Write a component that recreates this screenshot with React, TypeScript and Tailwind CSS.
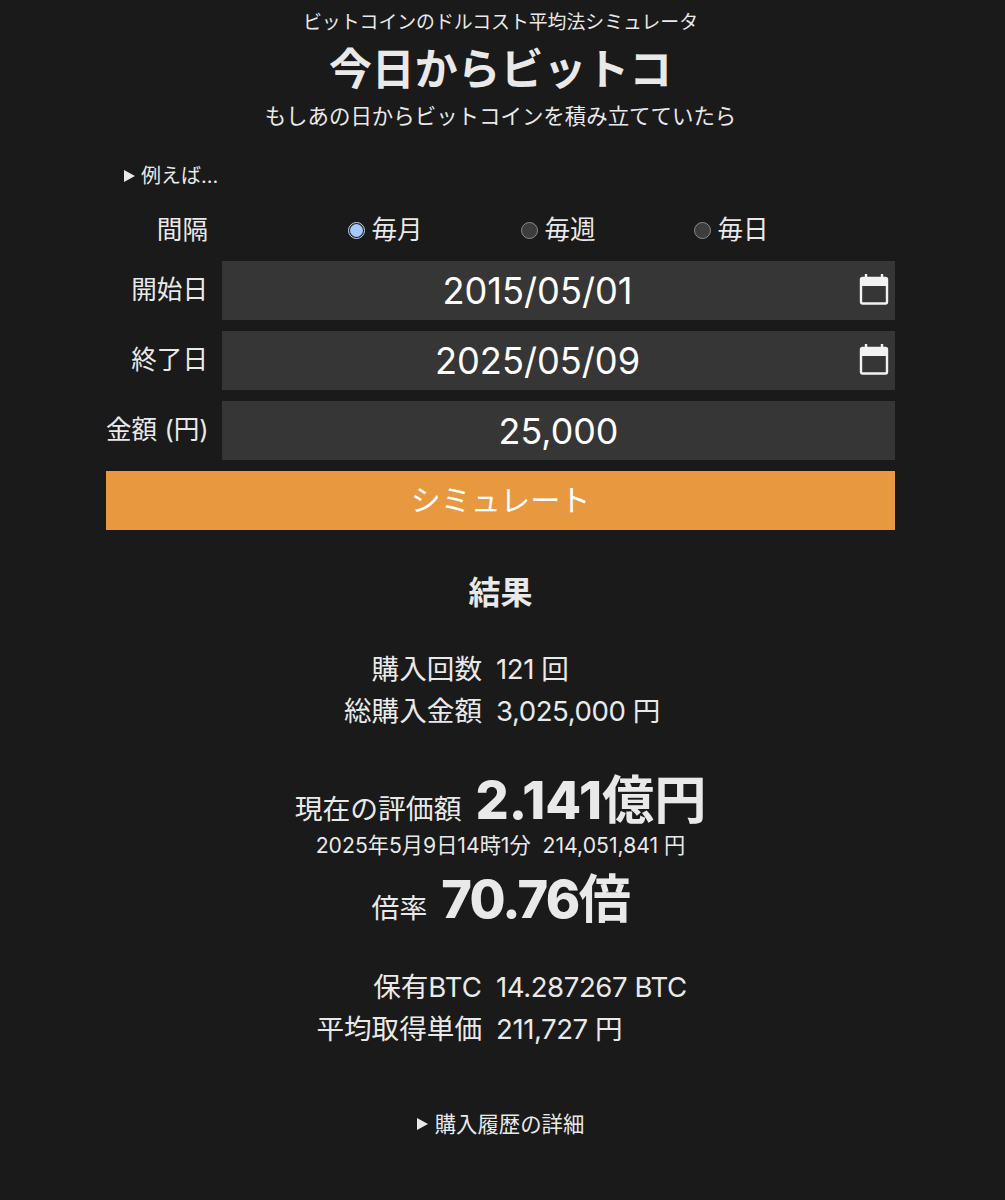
const fontStack = 'font-["Inter","Noto_Sans_CJK_JP",sans-serif]';

function CalendarIcon() {
  return (
    <svg width="30" height="32" viewBox="0 0 30 32" fill="none" className="absolute right-[6px] top-[12px] text-[#f2f2f2]">
      <path d="M7 1v4M23 1v4" stroke="currentColor" strokeWidth="2.4" />
      <path d="M1.5 7a2 2 0 0 1 2-2h23a2 2 0 0 1 2 2v6h-27z" fill="currentColor" />
      <rect x="2" y="5" width="26" height="25.5" rx="1.5" stroke="currentColor" strokeWidth="2.4" />
    </svg>
  );
}

function Radio({ label, checked }: { label: string; checked?: boolean }) {
  return (
    <div className="flex items-center justify-center gap-[6px]">
      {checked ? (
        <span className="w-[17px] h-[17px] rounded-full border border-[#c9d9f5] bg-[#1a1a1a] flex items-center justify-center">
          <span className="w-[13px] h-[13px] rounded-full bg-[#a5c8fd]" />
        </span>
      ) : (
        <span className="w-[17px] h-[17px] rounded-full border border-[#8a8a8a] bg-[#3d3d3d]" />
      )}
      <span>{label}</span>
    </div>
  );
}

function FormRow({ label, children }: { label: string; children: React.ReactNode }) {
  return (
    <div className="flex items-center gap-[14px]">
      <div className="w-[102px] text-right whitespace-nowrap">{label}</div>
      <div className="flex-1">{children}</div>
    </div>
  );
}

function DateField({ value }: { value: string }) {
  return (
    <div className="relative h-[59px] bg-[#363636] flex items-center justify-center pr-[42px] pt-[2px] text-[36.2px] text-white">
      {value}
      <CalendarIcon />
    </div>
  );
}

function StatRow({ label, value }: { label: string; value: string }) {
  return (
    <div className="grid grid-cols-[376px_1fr] gap-[14px] h-[42px] items-center text-[27.6px]">
      <div className="text-right">{label}</div>
      <div className="tracking-[-0.45px]">{value}</div>
    </div>
  );
}

export default function App() {
  return (
    <div className={`${fontStack} bg-[#1a1a1a] text-[#e9e9e9] min-h-[1200px] text-[25.6px] overflow-hidden`}>
      <div className="w-[789px] ml-[106px]">
        <div className="text-center pt-[10px]">
          <p className="text-[18.85px] leading-[25px]">ビットコインのドルコスト平均法シミュレータ</p>
          <h1 className="text-[42.9px] font-bold leading-[60px] mt-[4px]">今日からビットコ</h1>
          <p className="text-[21.45px] leading-[30px] mt-[2px]">もしあの日からビットコインを積み立てていたら</p>
        </div>

        <div className="mt-[31px] ml-[18px] text-[20px] leading-[28px] flex items-center">
          <span className="w-0 h-0 border-y-[6.5px] border-y-transparent border-l-[11px] border-l-[#e9e9e9] mr-[6px]" />
          例えば...
        </div>

        <div className="mt-[21px] flex flex-col gap-[11px]">
          <FormRow label="間隔">
            <div className="w-[519px] mx-auto grid grid-cols-3 h-[39px] items-center">
              <Radio label="毎月" checked />
              <Radio label="毎週" />
              <Radio label="毎日" />
            </div>
          </FormRow>
          <FormRow label="開始日">
            <DateField value="2015/05/01" />
          </FormRow>
          <FormRow label="終了日">
            <DateField value="2025/05/09" />
          </FormRow>
          <FormRow label="金額 (円)">
            <div className="h-[59px] bg-[#363636] flex items-center justify-center pt-[2px] text-[35.8px] text-white">25,000</div>
          </FormRow>
          <button className="h-[59px] bg-[#e8993f] text-white text-[30px]">シミュレート</button>
        </div>

        <h2 className="text-center text-[32px] font-bold leading-[44px] mt-[41px]">結果</h2>

        <div className="mt-[34px]">
          <StatRow label="購入回数" value="121 回" />
          <StatRow label="総購入金額" value="3,025,000 円" />
        </div>

        <div className="text-center mt-[36px]">
          <div className="flex items-baseline justify-center gap-[14px] leading-[62px] h-[62px]">
            <span className="text-[27.8px]">現在の評価額</span>
            <span className="text-[52.2px] font-bold"><span className="font-extrabold">2.141</span>億円</span>
          </div>
          <div className="text-[21.2px] leading-[28px]">2025年5月9日14時1分&nbsp;&nbsp;214,051,841 円</div>
          <div className="flex items-baseline justify-center gap-[14px] leading-[62px] h-[62px] mt-[9px]">
            <span className="text-[27.8px]">倍率</span>
            <span className="text-[52.2px] font-bold tracking-[-1.6px]"><span className="font-extrabold">70.76</span>倍</span>
          </div>
        </div>

        <div className="mt-[37px]">
          <StatRow label="保有BTC" value="14.287267 BTC" />
          <StatRow label="平均取得単価" value="211,727 円" />
        </div>

        <div className="mt-[59px] flex items-center justify-center text-[21.4px] leading-[28px]">
          <span className="w-0 h-0 border-y-[6.5px] border-y-transparent border-l-[11px] border-l-[#e9e9e9] mr-[7px]" />
          購入履歴の詳細
        </div>
      </div>
    </div>
  );
}
